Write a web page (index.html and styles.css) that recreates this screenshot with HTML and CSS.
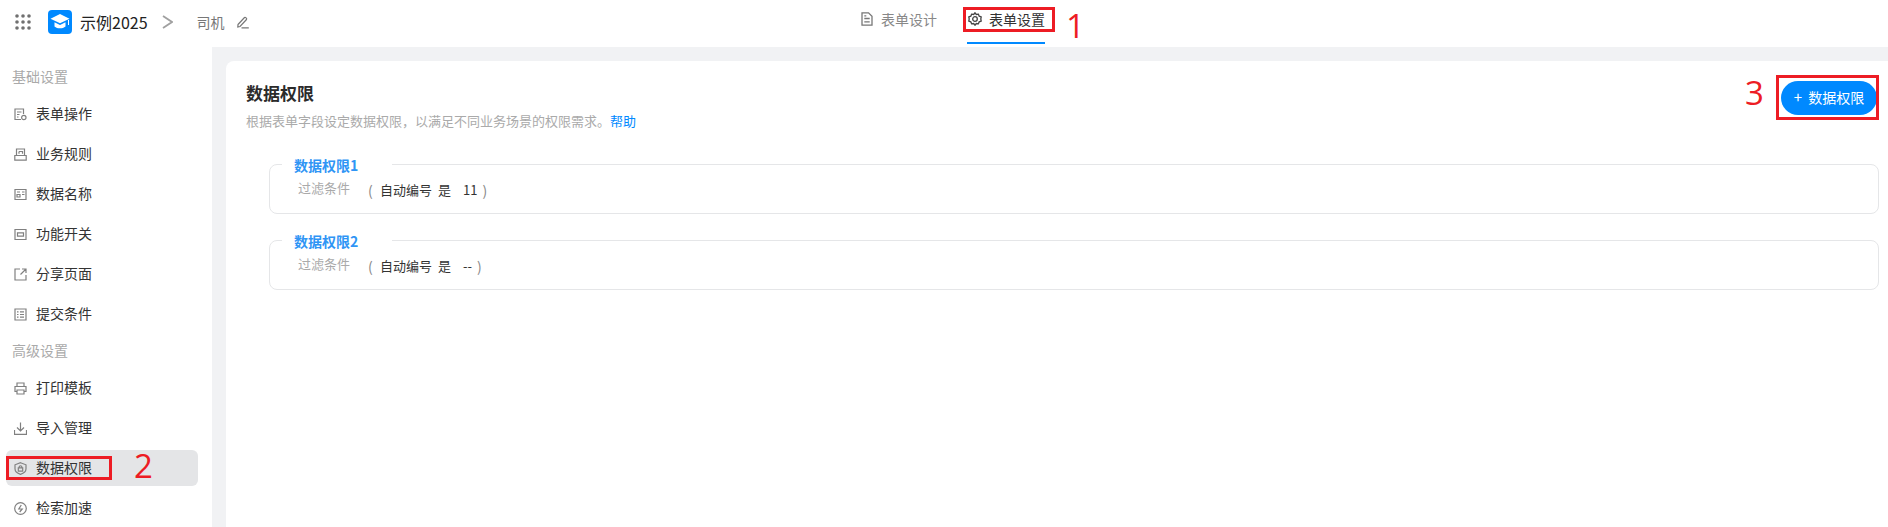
FILE: index.html
```html
<!DOCTYPE html>
<html lang="zh-CN">
<head>
<meta charset="utf-8">
<title>数据权限</title>
<link rel="stylesheet" href="styles.css">
</head>
<body>
<header class="topbar">
  <div class="brand">
    <svg class="apps" width="16" height="16" viewBox="0 0 16 16" fill="#707070"><circle cx="2" cy="2" r="1.800"/><circle cx="8" cy="2" r="1.800"/><circle cx="14" cy="2" r="1.800"/><circle cx="2" cy="8" r="1.800"/><circle cx="8" cy="8" r="1.800"/><circle cx="14" cy="8" r="1.800"/><circle cx="2" cy="14" r="1.800"/><circle cx="8" cy="14" r="1.800"/><circle cx="14" cy="14" r="1.800"/></svg>
    <span class="logo"><svg width="24" height="24" viewBox="0 0 24 24"><path fill="#fff" d="M12 4 2.500 8.700l9.500 4.600 9.500-4.600z"/><path fill="#fff" d="M6.500 12.300v4.200c1.500 1.300 3.400 1.800 5.500 1.800s4-.5 5.500-1.800v-4.200L12 15z"/><path fill="#fff" d="M20 10h1v5h-1z"/></svg></span>
    <span class="app-name">示例2025</span>
    <svg class="chev" width="11" height="14" viewBox="0 0 11 14" fill="none" stroke="#a0a0a0" stroke-width="1.800"><path d="M1 1l9 6-9 6"/></svg>
    <span class="form-name">司机</span>
    <svg class="pencil" width="12" height="13" viewBox="0 0 12 13" fill="none" stroke="#777" stroke-width="1.200"><path d="M1 8.500 7.500 1.500c.8-.7 2.800 1 2 2L3 10.500 .8 11zM4.500 11.800H11.800"/></svg>
  </div>
  <nav class="tabs">
    <a class="tab">
      <svg width="12" height="14" viewBox="0 0 12 14" fill="none" stroke="#777" stroke-width="1.300"><path d="M1 .8h6.500L11 4.300v8.900H1zM3.300 6.500h5.400M3.300 9.800h5.400M3.300 3.800h2"/></svg>
      表单设计
    </a>
    <a class="tab tab-active">
      <svg width="14" height="14" viewBox="0 0 14 14" fill="none" stroke="#444" stroke-width="1.300"><path d="M7 .8l1.300 1.700 2.100-.3.800 2 2 .8-.4 2 .4 2-2 .8-.8 2-2.100-.3L7 13.200l-1.300-1.700-2.100.3-.8-2-2-.8.400-2-.4-2 2-.8.800-2 2.100.3z"/><circle cx="7" cy="7" r="2.300"/></svg>
      表单设置
    </a>
  </nav>
</header>

<div class="main">
  <aside class="sidebar">
    <div class="group-label">基础设置</div>
    <a class="item"><svg class="ico" viewBox="0 0 13 13"><path d="M7 11.500H1V1h8.500v5M3 4h4.500M3 6.500h2.500M3 9h1.500"/><circle cx="9.800" cy="9.500" r="2.200"/></svg>表单操作</a>
    <a class="item"><svg class="ico" viewBox="0 0 13 13"><path d="M2.500 7.500V1h8v6.500M.8 7.500h11.400v4.700H.8zM5 3.500h3.500V5.800M5 3.500v2.300"/></svg>业务规则</a>
    <a class="item"><svg class="ico" viewBox="0 0 13 13"><path d="M1 1.500h11v10H1zM3 4h3M3 6.500h3v2.500H3zM8 4h2.500M8 6.500h2.500"/></svg>数据名称</a>
    <a class="item"><svg class="ico" viewBox="0 0 13 13"><path d="M1 1.500h11v10H1zM3.500 4.800h6v3.400h-6z"/></svg>功能开关</a>
    <a class="item"><svg class="ico" viewBox="0 0 13 13"><path d="M6 1H1v11h11V7M8 1h4v4M12 1 6.500 6.500"/></svg>分享页面</a>
    <a class="item"><svg class="ico" viewBox="0 0 13 13"><path d="M1 1h11v11H1zM3 3.800h1.500M6 3.800h4M3 6.500h1.500M6 6.500h4M3 9.200h1.500M6 9.200h4"/></svg>提交条件</a>
    <div class="group-label group-label-2">高级设置</div>
    <a class="item"><svg class="ico" viewBox="0 0 13 13"><path d="M3 4V1h7v3M3 9.500H1V4.500h11v5h-2M3 8h7v4H3z"/></svg>打印模板</a>
    <a class="item"><svg class="ico" viewBox="0 0 13 13"><path d="M6.500 .5v8M3 5.500l3.500 3.500L10 5.500M.5 8v4.300h12V8"/></svg>导入管理</a>
    <a class="item item-active"><svg class="ico" viewBox="0 0 13 13"><path d="M6.500 .7 12 2.800v4c0 2.700-2.500 4.700-5.500 5.500C3.500 11.500 1 9.500 1 6.800v-4z"/><path d="M4.300 5.800h4.400v3.400H4.300zM5.200 5.800V4.800c0-1.400 2.600-1.400 2.600 0v1"/></svg>数据权限</a>
    <a class="item"><svg class="ico" viewBox="0 0 13 13"><circle cx="6.500" cy="6.500" r="5.800"/><path d="M7.300 3 4.800 7h3.400L5.700 10"/></svg>检索加速</a>
  </aside>

  <main class="content">
    <section class="card">
      <div class="card-head">
        <div>
          <h1 class="title">数据权限</h1>
          <p class="desc">根据表单字段设定数据权限，以满足不同业务场景的权限需求。<a class="help">帮助</a></p>
        </div>
        <button class="add-btn"><span class="plus">+</span>数据权限</button>
      </div>
      <fieldset class="rule">
        <legend class="rule-name">数据权限1</legend>
        <div class="rule-row"><span class="rule-label">过滤条件</span><span class="paren">(</span><span>自动编号</span><span class="op">是</span><span class="val">11</span><span class="paren-end">)</span></div>
      </fieldset>
      <fieldset class="rule">
        <legend class="rule-name">数据权限2</legend>
        <div class="rule-row"><span class="rule-label">过滤条件</span><span class="paren">(</span><span>自动编号</span><span class="op">是</span><span class="val">--</span><span class="paren-end">)</span></div>
      </fieldset>
    </section>
  </main>
</div>

<div class="mark mark-1"></div>
<div class="mark mark-2"></div>
<div class="mark mark-3"></div>
<span class="num num-1">1</span>
<span class="num num-2">2</span>
<span class="num num-3">3</span>
</body>
</html>
```
FILE: styles.css
```css
* { box-sizing: border-box; }
html, body { height: 100%; }
body {
  margin: 0;
  height: 527px;
  overflow: hidden;
  position: relative;
  display: flex;
  flex-direction: column;
  background: #fff;
  color: #333;
  font-family: "Noto Sans CJK SC", "Liberation Sans", sans-serif;
  font-size: 14px;
}
.topbar {
  flex: 0 0 47px;
  display: flex;
  align-items: center;
  background: #fff;
  padding-left: 15px;
}
.brand {
  display: flex;
  align-items: center;
  flex: 0 0 846px;
  margin-bottom: 3px;
}
.logo {
  width: 24px;
  height: 24px;
  margin-left: 17px;
  border-radius: 4px;
  background: #0089ff;
  display: flex;
}
.app-name { margin-left: 8px; font-size: 16px; color: #222; }
.chev { margin-left: 14px; }
.form-name { margin-left: 24px; color: #777; }
.pencil { margin-left: 12px; }
.tabs { display: flex; align-self: stretch; gap: 30px; }
.tab {
  display: flex;
  align-items: center;
  gap: 8px;
  height: 44px;
  color: #888;
  padding-bottom: 6px;
}
.tab-active { color: #333; border-bottom: 2px solid #0089ff; gap: 7px; padding: 0 0 4px 1px; }
.main { flex: 1; display: flex; min-height: 0; background: #f1f2f4; }
.sidebar {
  flex: 0 0 212px;
  background: #fff;
  padding: 19px 14px 0 6px;
}
.group-label { height: 22px; line-height: 20px; padding-left: 6px; color: #aaa; margin-bottom: 8px; }
.group-label-2 { margin-top: 8px; }
.item {
  display: flex;
  align-items: center;
  height: 36px;
  margin-bottom: 4px;
  padding: 0 0 2px 8px;
  border-radius: 6px;
  color: #333;
}
.item-active { background: #e4e5e7; }
.ico {
  width: 13px;
  height: 13px;
  margin: 2px 9px 0 0;
  fill: none;
  stroke: #808080;
  stroke-width: 1.200;
}
.content { flex: 1; min-width: 0; padding: 14px 0 0 14px; }
.card {
  height: 100%;
  background: #fff;
  border-radius: 8px 0 0 0;
  padding: 20px 9px 0 20px;
}
.card-head { display: flex; justify-content: space-between; align-items: flex-start; }
.title { margin: 0; font-size: 17px; font-weight: 700; line-height: 24px; color: #2b2b2b; }
.desc { margin: 6px 0 0; font-size: 13px; line-height: 20px; color: #aaa; }
.help { color: #0089ff; }
.add-btn {
  width: 96px;
  height: 34px;
  margin: 0 2px 0 0;
  border: 0;
  border-radius: 17px;
  background: #0089ff;
  color: #fff;
  font: 14px "Noto Sans CJK SC", sans-serif;
  padding: 0 0 3px 0;
}
.plus { margin-right: 6px; font-size: 15px; }
.rule {
  margin: 23px 0 0 23px;
  height: 60px;
  padding: 0 0 0 27px;
  border: 1px solid #e5e6e8;
  border-radius: 8px;
  min-width: 0;
}
.rule + .rule { margin-top: 16px; }
.rule-name {
  width: 110px;
  padding: 2px 12px 0;
  margin-left: -15px;
  color: #2f95f5;
  font-weight: 700;
  font-size: 14px;
  line-height: 18px;
}
.rule-row { display: flex; align-items: center; font-size: 13px; color: #333; line-height: 18px; margin-top: 7px; }
.rule-label { width: 70px; color: #aaa; margin-left: 1px; margin-top: -4px; }
.paren { color: #888; width: 12px; font-size: 14px; }
.op { margin-left: 6px; }
.val { margin-left: 12px; }
.paren-end { color: #888; margin-left: 5px; font-size: 14px; }

.mark { position: absolute; border: 3px solid #ed1c24; }
.mark-1 { left: 963px; top: 7px; width: 92px; height: 25px; }
.mark-2 { left: 6px; top: 456px; width: 106px; height: 24px; }
.mark-3 { left: 1776px; top: 75px; width: 103px; height: 45px; }
.num {
  position: absolute;
  color: #ed1c24;
  font-family: "Open Sans", sans-serif;
  font-weight: 400;
  font-size: 33px;
  line-height: 33px;
}
.num-1 { left: 1066px; top: 9px; }
.num-2 { left: 134px; top: 449px; }
.num-3 { left: 1745px; top: 76px; }
```
